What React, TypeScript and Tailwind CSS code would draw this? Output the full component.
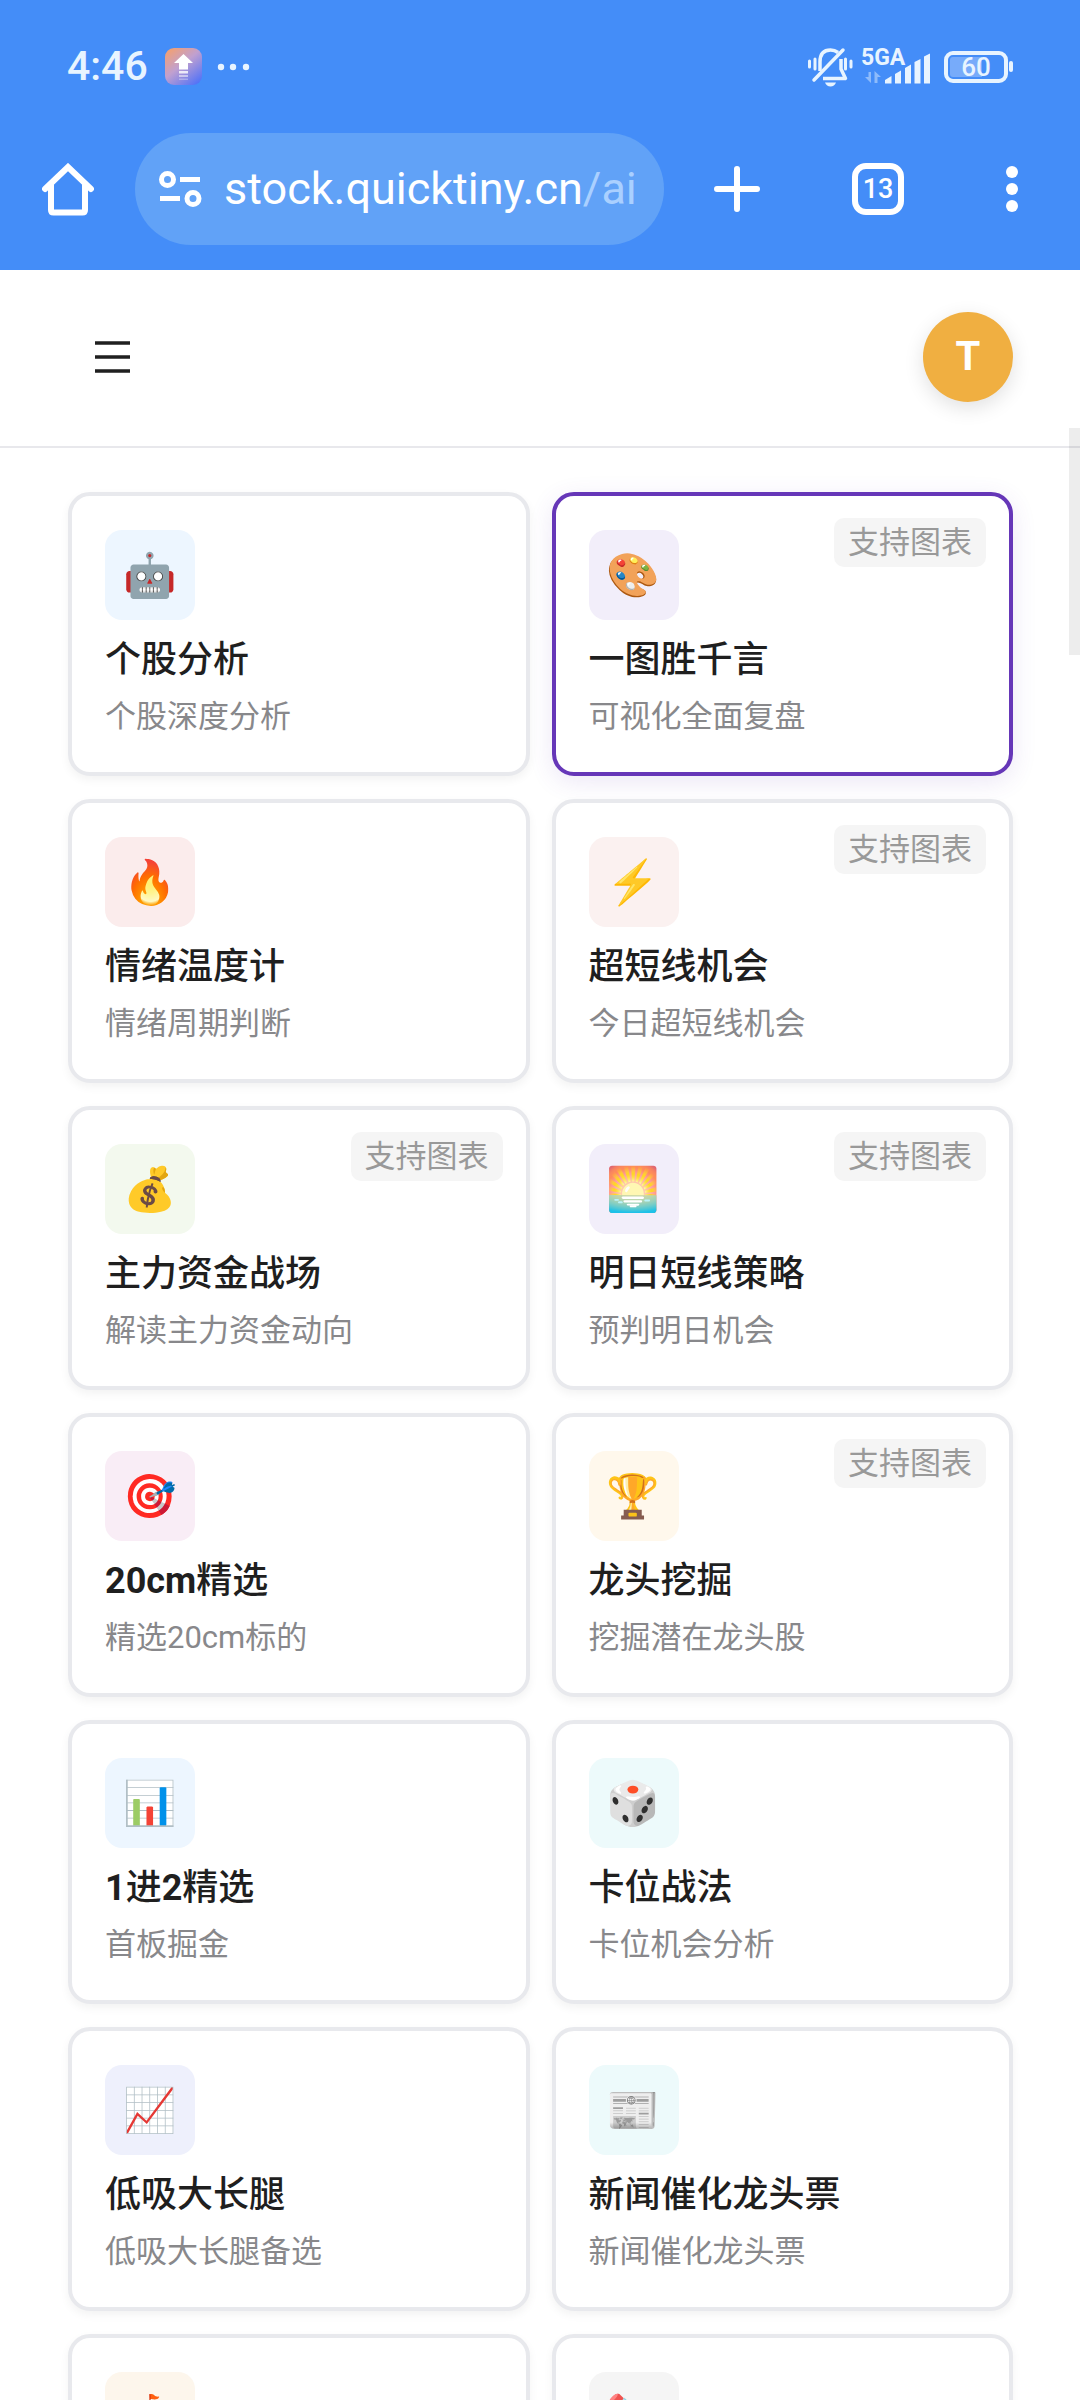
import { useState } from 'react'

type Feature = {
  icon: string
  tint: string
  title?: string
  desc?: string
  chart?: boolean
}

const features: Feature[] = [
  { icon: '🤖', tint: 'bg-[#edf6ff]', title: '个股分析', desc: '个股深度分析' },
  { icon: '🎨', tint: 'bg-[#f2eefa]', title: '一图胜千言', desc: '可视化全面复盘', chart: true },
  { icon: '🔥', tint: 'bg-[#fbecec]', title: '情绪温度计', desc: '情绪周期判断' },
  { icon: '⚡', tint: 'bg-[#fbf1f0]', title: '超短线机会', desc: '今日超短线机会', chart: true },
  { icon: '💰', tint: 'bg-[#f3f9ee]', title: '主力资金战场', desc: '解读主力资金动向', chart: true },
  { icon: '🌅', tint: 'bg-[#f2eefa]', title: '明日短线策略', desc: '预判明日机会', chart: true },
  { icon: '🎯', tint: 'bg-[#f9edf6]', title: '20cm精选', desc: '精选20cm标的' },
  { icon: '🏆', tint: 'bg-[#fff8ec]', title: '龙头挖掘', desc: '挖掘潜在龙头股', chart: true },
  { icon: '📊', tint: 'bg-[#edf6ff]', title: '1进2精选', desc: '首板掘金' },
  { icon: '🎲', tint: 'bg-[#edfafb]', title: '卡位战法', desc: '卡位机会分析' },
  { icon: '📈', tint: 'bg-[#eef0fc]', title: '低吸大长腿', desc: '低吸大长腿备选' },
  { icon: '📰', tint: 'bg-[#edfafb]', title: '新闻催化龙头票', desc: '新闻催化龙头票' },
  { icon: '🎪', tint: 'bg-[#fdf6ec]' },
  { icon: '✏️', tint: 'bg-[#f5f5f5]' },
]

function StatusBar() {
  return (
    <div className="flex h-[133px] items-center justify-between px-[67px] text-[#e8f4ff]">
      <div className="flex items-center">
        <span className="text-[41px] leading-none font-medium">4:46</span>
        <svg className="ml-[17px] h-[37px] w-[37px]" viewBox="0 0 37 37">
          <defs>
            <linearGradient id="app" x1="0.1" y1="0" x2="0.9" y2="1">
              <stop offset="0" stopColor="#f5a06e" />
              <stop offset="0.45" stopColor="#c0a0d0" />
              <stop offset="1" stopColor="#4b70fa" />
            </linearGradient>
          </defs>
          <rect width="37" height="37" rx="9" fill="url(#app)" />
          <path d="M18.500 6 L28 15 H23 V21.500 H14 V15 H9 Z" fill="#fff" />
          <rect x="14" y="23" width="9" height="2.500" fill="#fff" opacity="0.8" />
          <rect x="14" y="27" width="9" height="2" fill="#fff" opacity="0.5" />
          <rect x="14" y="30.500" width="9" height="1.500" fill="#fff" opacity="0.3" />
        </svg>
        <svg className="ml-[15px] h-[8px] w-[34px]" viewBox="0 0 34 8" fill="currentColor">
          <circle cx="4" cy="4" r="3.200" />
          <circle cx="16" cy="4" r="3.200" />
          <circle cx="29" cy="4" r="3.200" />
        </svg>
      </div>

      <div className="flex items-center">
        <svg className="h-[40px] w-[45px]" viewBox="0 0 45 40" fill="none" stroke="currentColor" strokeWidth="3.500" strokeLinejoin="round">
          <path d="M12 24 V15 C12 7 16 3 22.500 3 C26 3 28 4 30 5.500" />
          <path d="M33 12 V22 L37.500 31.500 H15" />
          <path d="M6 33 L35 3" strokeLinecap="round" />
          <path d="M17 35.500 H28 C27 38 25 39.500 22.500 39.500 C20 39.500 18 38 17 35.500Z" fill="currentColor" stroke="none" />
          <path d="M1.500 14 V20 M7 12 V22 M37.500 12 V22 M43 14 V20" strokeWidth="3" strokeLinecap="round" />
        </svg>
        <div className="relative ml-[8px] h-[34px] w-[70px]">
          <span className="absolute top-0 left-0 text-[23px] leading-[16px] font-bold">5GA</span>
          <svg className="absolute inset-0 h-full w-full" viewBox="0 0 70 34" fill="currentColor">
            <path d="M10 22 V33 L4 27 H7.500 V22Z M13.500 33 V21 L20 27 H16.500 V33Z" opacity="0.45" />
            <path d="M24 30 L30.500 26 V33.500 H24Z" />
            <path d="M34 24 L40 20.500 V33.500 H34Z" />
            <path d="M44 18 L50 14.500 V33.500 H44Z" />
            <path d="M53.500 12 L59.500 9 V33.500 H53.500Z" />
            <path d="M63 6.500 L69 3.500 V33.500 H63Z" />
          </svg>
        </div>
        <div className="ml-[13px] flex items-center gap-[1px]">
          <div className="flex h-[32px] w-[64px] items-center justify-center rounded-[9px] border-4 border-current bg-linear-to-r from-[#77abfa] from-60% to-transparent to-60% bg-clip-content p-[2px]">
            <span className="text-[26px] leading-none font-medium">60</span>
          </div>
          <div className="h-[11px] w-[4px] rounded-[2px] bg-current" />
        </div>
      </div>
    </div>
  )
}

function BrowserBar() {
  return (
    <div className="flex h-[137px] items-start pr-[61px] pl-[42px] text-white">
      <button type="button" aria-label="主页" className="mt-[30px]">
        <svg className="h-[53px] w-[52px]" viewBox="0 0 52 53" fill="none" stroke="currentColor" strokeWidth="6" strokeLinejoin="round" strokeLinecap="round">
          <path d="M3 26 L26 4 L49 26" strokeLinejoin="miter" />
          <path d="M9 22 V47 Q9 49.500 11.500 49.500 H40.500 Q43 49.500 43 47 V22" />
        </svg>
      </button>
      <div className="ml-[41px] flex h-[112px] min-w-0 flex-1 items-center rounded-full bg-[#61a2f7] pl-[24px]">
        <svg className="h-[38px] w-[43px] shrink-0" viewBox="0 0 43 38" fill="none" stroke="currentColor" strokeWidth="5">
          <circle cx="8.500" cy="9.500" r="6" />
          <path d="M21 9.500 H41 M1 28.500 H21" />
          <circle cx="34" cy="28.500" r="6" />
        </svg>
        <a href="https://stock.quicktiny.cn/ai" className="ml-[22px] truncate text-[45px] leading-[60px]">
          stock.quicktiny.cn<span className="text-[#aad0ff]">/ai</span>
        </a>
      </div>
      <button type="button" aria-label="新建标签页" className="mt-[33px] ml-[50px]">
        <svg className="h-[46px] w-[46px]" viewBox="0 0 46 46" stroke="currentColor" strokeWidth="6" strokeLinecap="round">
          <path d="M23 3 V43 M3 23 H43" />
        </svg>
      </button>
      <button type="button" aria-label="标签页" className="mt-[30px] ml-[92px] flex h-[52px] w-[52px] items-center justify-center rounded-[14px] border-6 border-white text-[27px] leading-none font-medium">
        13
      </button>
      <button type="button" aria-label="更多" className="mt-[32px] ml-[101px]">
        <svg className="h-[48px] w-[14px]" viewBox="0 0 14 48" fill="currentColor">
          <circle cx="7" cy="7" r="6" />
          <circle cx="7" cy="24" r="6" />
          <circle cx="7" cy="41" r="6" />
        </svg>
      </button>
    </div>
  )
}

// Latin letters and digits are set heavier than the Chinese around them
function CardTitle({ text }: { text: string }) {
  return (
    <span className="mt-[15px] text-[36px] leading-[51px] font-medium text-[#1f1f1f]">
      {text.split(/([0-9a-z]+)/).map((part, i) =>
        i % 2 === 1 ? (
          <b key={i} className="font-bold">
            {part}
          </b>
        ) : (
          part
        ),
      )}
    </span>
  )
}

function FeatureCard({ item, active, onSelect }: { item: Feature; active: boolean; onSelect: () => void }) {
  return (
    <button
      type="button"
      aria-pressed={active}
      onClick={onSelect}
      className={`relative flex min-h-[284px] flex-col items-start rounded-[22px] border-4 bg-white px-[33px] pt-[34px] pb-[32px] text-left ${
        active
          ? 'border-[#6637b8] shadow-[0_6px_24px_rgba(102,55,184,0.12)]'
          : 'border-[#e8e9ed] shadow-[0_4px_10px_rgba(0,0,0,0.05)]'
      }`}
    >
      {item.chart && (
        <span className="absolute top-[22px] right-[23px] rounded-[10px] bg-[#f5f5f5] px-[14px] text-[31px] leading-[49px] text-[#999]">
          支持图表
        </span>
      )}
      <span className={`flex h-[90px] w-[90px] items-center justify-center rounded-[17px] text-[43px] leading-none ${item.tint}`}>
        {item.icon}
      </span>
      {item.title && <CardTitle text={item.title} />}
      {item.desc && <span className="mt-[8px] text-[31px] leading-[46px] text-[#88888b]">{item.desc}</span>}
    </button>
  )
}

export default function App() {
  const [selected, setSelected] = useState(1)

  return (
    <div className="flex h-screen flex-col overflow-hidden bg-white font-[Roboto,'Noto_Sans_CJK_SC','Noto_Color_Emoji',sans-serif]">
      <div className="shrink-0 bg-[#448df8]">
        <StatusBar />
        <BrowserBar />
      </div>

      <header className="flex h-[178px] shrink-0 items-center justify-between border-b-2 border-[#e8e8ec] px-[67px] pb-[3px]">
        <button type="button" aria-label="菜单" className="ml-[28px]">
          <svg className="h-[32px] w-[36px]" viewBox="0 0 36 32" stroke="#1f1f1f" strokeWidth="3.500">
            <path d="M0 2 H35 M0 16 H35 M0 30 H35" />
          </svg>
        </button>
        <button
          type="button"
          aria-label="账户"
          className="flex h-[90px] w-[90px] items-center justify-center rounded-full bg-[#f0af41] text-[40px] leading-none font-bold text-white shadow-[0_6px_20px_rgba(0,0,0,0.12)]"
        >
          T
        </button>
      </header>

      <main className="min-h-0 flex-1 overflow-y-auto [scrollbar-width:none]">
        <div className="grid grid-cols-2 gap-x-[22px] gap-y-[23px] pt-[44px] pr-[67px] pb-[44px] pl-[68px]">
          {features.map((item, index) => (
            <FeatureCard key={item.icon} item={item} active={index === selected} onSelect={() => setSelected(index)} />
          ))}
        </div>
      </main>

      {/* scroll thumb */}
      <div className="absolute top-[428px] right-0 h-[227px] w-[11px] bg-black/7" />
    </div>
  )
}
